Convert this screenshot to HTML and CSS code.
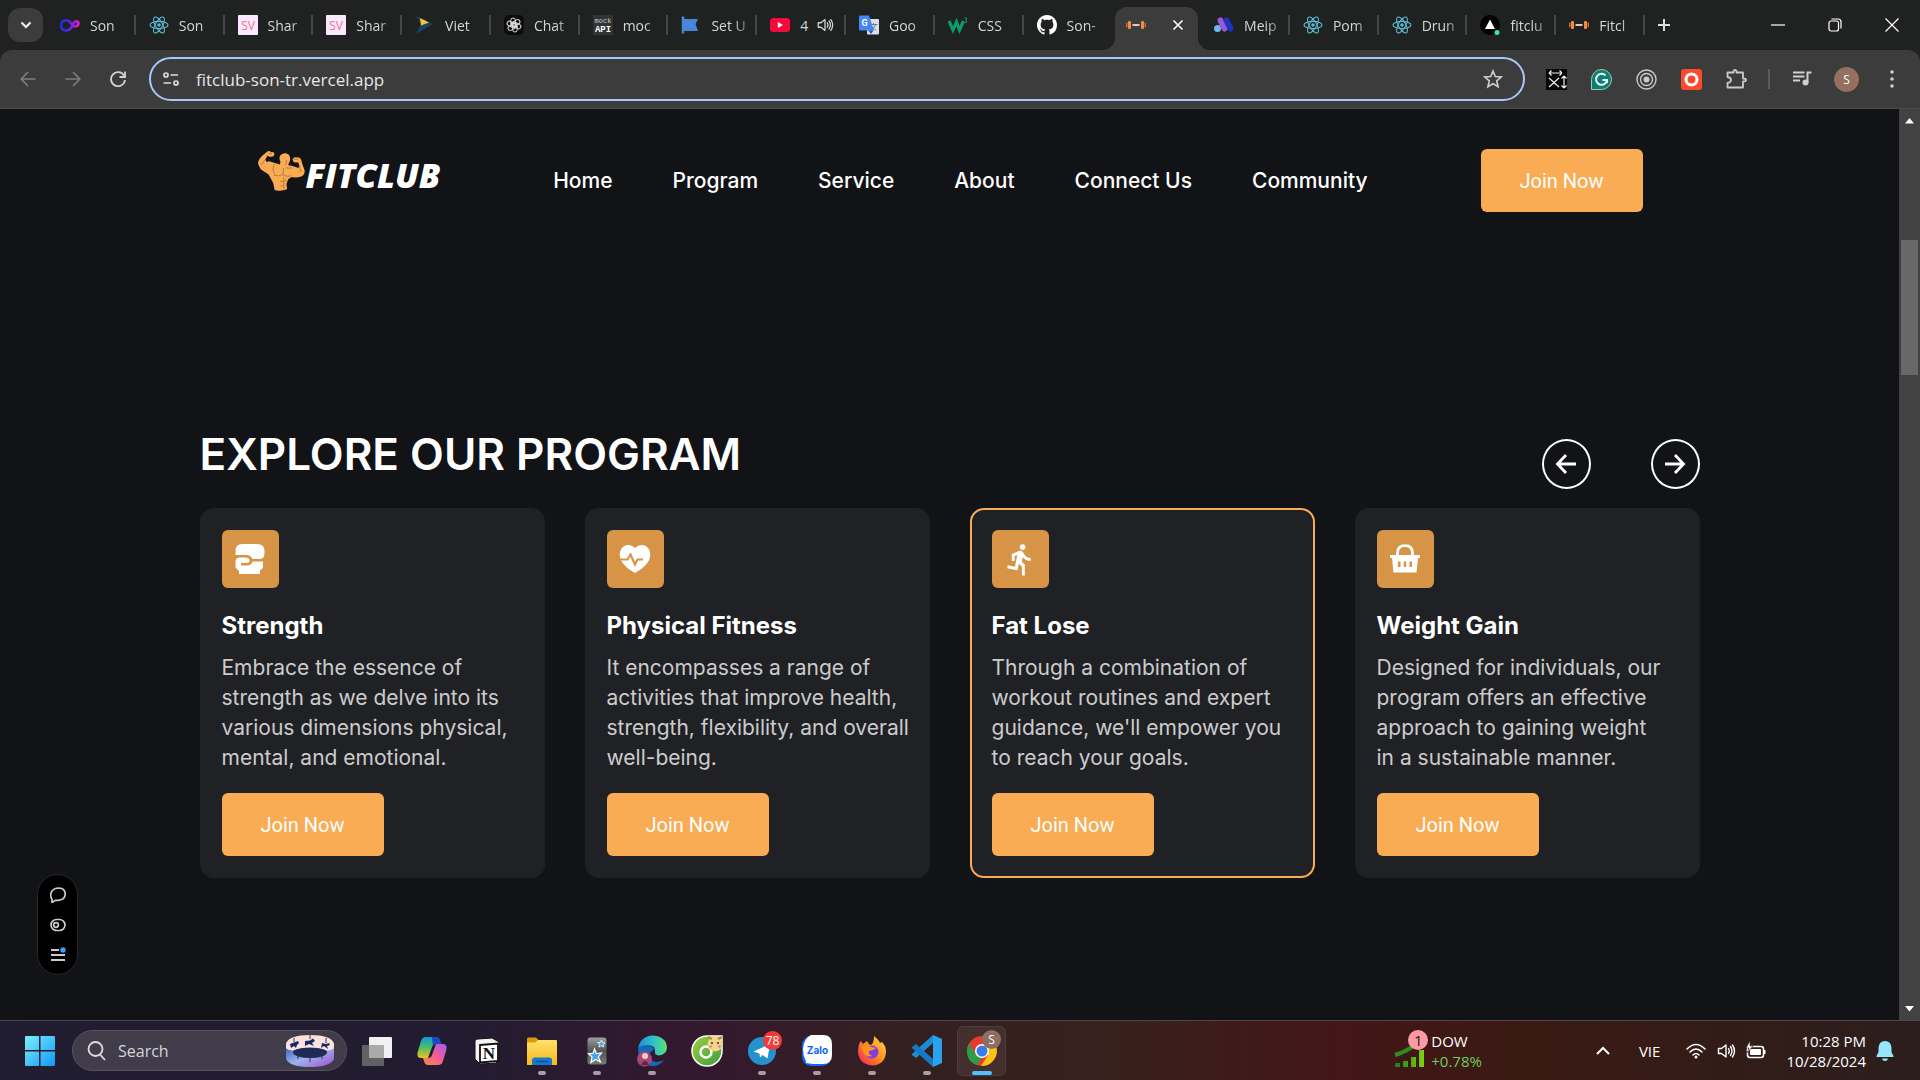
FILE: index.html
```html
<!DOCTYPE html>
<html lang="en">
<head>
<meta charset="utf-8">
<meta name="viewport" content="width=device-width, initial-scale=1">
<title>Fitclub</title>
<link rel="stylesheet" href="styles.css">
</head>
<body>
<svg class="sprite" aria-hidden="true">
  <defs>
    <linearGradient id="win" x1="0" y1="0" x2="1" y2="1"><stop offset="0" stop-color="#7df0fc"/><stop offset="1" stop-color="#0f97f5"/></linearGradient>
    <linearGradient id="loop" x1="0" x2="1"><stop offset="0" stop-color="#1b2ef0"/><stop offset=".5" stop-color="#5b25e8"/><stop offset="1" stop-color="#f516d8"/></linearGradient>
    <linearGradient id="drum" x1="0" y1="0" x2="1" y2="1"><stop offset="0" stop-color="#2c55b5"/><stop offset=".5" stop-color="#9db4ec"/><stop offset="1" stop-color="#a04bd0"/></linearGradient>
    <linearGradient id="cpA" x1="0" y1="0" x2="0" y2="1"><stop offset="0" stop-color="#1693e8"/><stop offset=".45" stop-color="#3fc06a"/><stop offset="1" stop-color="#f2c024"/></linearGradient>
    <linearGradient id="cpB" x1="1" y1="0" x2="0" y2="1"><stop offset="0" stop-color="#a35cf5"/><stop offset=".5" stop-color="#f45c96"/><stop offset="1" stop-color="#f98d3d"/></linearGradient>
    <linearGradient id="fold" x1="0" y1="0" x2="0" y2="1"><stop offset="0" stop-color="#ffe06a"/><stop offset="1" stop-color="#f8b91f"/></linearGradient>
    <linearGradient id="edge" x1="0" y1="0" x2="1" y2="0"><stop offset="0" stop-color="#1b8fdc"/><stop offset=".6" stop-color="#35c6c4"/><stop offset="1" stop-color="#5fe06a"/></linearGradient>
    <linearGradient id="fox" x1="1" y1="0" x2="0" y2="1"><stop offset="0" stop-color="#ffe14a"/><stop offset=".5" stop-color="#ff8a1e"/><stop offset="1" stop-color="#f5156c"/></linearGradient>
    <linearGradient id="coc" x1="0" y1="0" x2="1" y2="1"><stop offset="0" stop-color="#9bd13c"/><stop offset="1" stop-color="#3f9a3f"/></linearGradient>
    <linearGradient id="bars" x1="0" x2="1"><stop offset="0" stop-color="#13801c"/><stop offset="1" stop-color="#7ed40c"/></linearGradient>
    <linearGradient id="anki" x1="0" y1="0" x2="0" y2="1"><stop offset="0" stop-color="#a0a0a0"/><stop offset=".5" stop-color="#555"/><stop offset="1" stop-color="#7a7a7a"/></linearGradient>
  </defs>
  <symbol id="react" viewBox="0 0 20 20"><g fill="none" stroke="#5bb8cf" stroke-width="1.1"><ellipse cx="10" cy="10" rx="9" ry="3.6"/><ellipse cx="10" cy="10" rx="9" ry="3.6" transform="rotate(60 10 10)"/><ellipse cx="10" cy="10" rx="9" ry="3.6" transform="rotate(120 10 10)"/></g><circle cx="10" cy="10" r="1.8" fill="#5bb8cf"/></symbol>
  <symbol id="dumbbell" viewBox="0 0 20 20"><rect x="0" y="7.500" width="1.500" height="5" rx=".7" fill="#c96a2c"/><rect x="2" y="6" width="3" height="8" rx="1" fill="#f08a45"/><rect x="6.500" y="9" width="7" height="2" fill="#e8c9b0"/><rect x="15" y="6" width="3" height="8" rx="1" fill="#f08a45"/><rect x="18.500" y="7.500" width="1.500" height="5" rx=".7" fill="#c96a2c"/></symbol>
  <symbol id="speaker" viewBox="0 0 20 20"><path d="M2.500 7.500H5.500L10 4V16L5.500 12.500H2.500ZM12.500 7.500Q14 10 12.500 12.500M14.500 5.500Q17.500 10 14.500 14.500M16.500 4Q20.500 10 16.500 16" fill="none" stroke="currentColor" stroke-width="1.400" stroke-linejoin="round" stroke-linecap="round"/></symbol>
</svg>

<header class="browser">
  <div class="tabstrip">
    <button class="tabsearch" aria-label="Search tabs"><svg width="12" height="8" viewBox="0 0 12 8"><path d="M1.500 1.500L6 6L10.500 1.500" fill="none" stroke="#fff" stroke-width="2"/></svg></button>
    <nav class="tabs" aria-label="Tabs">
      <a class="tab" href="#"><svg class="fav" viewBox="0 0 20 20"><path d="M12 11C10 17 1 17 1 10.500C1 4 9 4 11.500 9C13.500 13 18.500 11.500 18.500 8.500C18.500 5.500 14.500 5.500 13.500 8C12.500 10.500 12.500 11 11 13" fill="none" stroke="url(#loop)" stroke-width="2.400"/></svg><span class="ttl">Son</span></a>
      <a class="tab" href="#"><svg class="fav"><use href="#react"/></svg><span class="ttl">Son</span></a>
      <a class="tab" href="#"><svg class="fav" viewBox="0 0 20 20"><rect width="20" height="20" rx="1" fill="#fbeaff"/><text x="10" y="14.500" font-family="Open Sans, sans-serif" font-size="12" text-anchor="middle" fill="#ef7582">SV</text></svg><span class="ttl">Shar</span></a>
      <a class="tab" href="#"><svg class="fav" viewBox="0 0 20 20"><rect width="20" height="20" rx="1" fill="#fbeaff"/><text x="10" y="14.500" font-family="Open Sans, sans-serif" font-size="12" text-anchor="middle" fill="#ef7582">SV</text></svg><span class="ttl">Shar</span></a>
      <a class="tab" href="#"><svg class="fav" viewBox="0 0 20 20"><path d="M1 1L18 9L1 19L6 9Z" fill="#174267"/><path d="M5 3L14 7.500L6 10.500Z" fill="#f5c52a"/></svg><span class="ttl">Viet</span></a>
      <a class="tab" href="#"><svg class="fav" viewBox="0 0 20 20"><rect width="20" height="20" rx="5" fill="#0c0c0c"/><g fill="none" stroke="#ddd" stroke-width="1"><rect x="6.800" y="3" width="4.500" height="9" rx="2.200"/><rect x="6.800" y="3" width="4.500" height="9" rx="2.200" transform="rotate(60 10 10)"/><rect x="6.800" y="3" width="4.500" height="9" rx="2.200" transform="rotate(120 10 10)"/><rect x="6.800" y="3" width="4.500" height="9" rx="2.200" transform="rotate(180 10 10)"/><rect x="6.800" y="3" width="4.500" height="9" rx="2.200" transform="rotate(240 10 10)"/><rect x="6.800" y="3" width="4.500" height="9" rx="2.200" transform="rotate(300 10 10)"/></g></svg><span class="ttl">Chat</span></a>
      <a class="tab" href="#"><svg class="fav" viewBox="0 0 20 20"><rect width="20" height="20" fill="#333"/><text x="10" y="8" font-family="Liberation Mono, monospace" font-size="7" text-anchor="middle" fill="#ccc">mock</text><text x="10" y="17" font-family="Liberation Mono, monospace" font-weight="700" font-size="9" text-anchor="middle" fill="#fff">API</text></svg><span class="ttl">moc</span></a>
      <a class="tab" href="#"><svg class="fav" viewBox="0 0 20 20"><path d="M2 1.500V18.500" stroke="#4a86d8" stroke-width="2.500"/><path d="M3 4H17L14.500 9L17 16H3Z" fill="#4a86d8"/></svg><span class="ttl">Set U</span></a>
      <a class="tab" href="#"><svg class="fav" viewBox="0 0 20 20"><rect y="3" width="20" height="14" rx="3.500" fill="#f8083c"/><path d="M7.800 7V13L13 10Z" fill="#fff"/></svg><span class="ttl short">4</span><svg class="sound"><use href="#speaker"/></svg></a>
      <a class="tab" href="#"><svg class="fav" viewBox="0 0 20 20"><rect x="8" y="4" width="12" height="15.500" rx="1" fill="#dcdfe3"/><path d="M10.500 9.500H18.500M14.500 8V9.500M12 16L17 9.500M12 10.500L17 15.500" stroke="#6b7a90" fill="none"/><path d="M0 1.500Q0 .5 1 .5H10L15 15.500H1Q0 15.500 0 14.500Z" fill="#4486f2"/><path d="M9 15.500H14.500L12 19Z" fill="#2a5bc0"/><text x="5.500" y="11" font-family="Roboto, sans-serif" font-weight="700" font-size="9" text-anchor="middle" fill="#fff">G</text></svg><span class="ttl">Goo</span></a>
      <a class="tab" href="#"><svg class="fav" viewBox="0 0 20 20"><path d="M1 6L5 15L8.500 7L11.500 15L15.500 6" fill="none" stroke="#0c9a66" stroke-width="3.200"/><path d="M16.500 3H19L17.500 5Q20 5.500 18.500 7.500L16.500 7.500" fill="none" stroke="#0c9a66"/></svg><span class="ttl">CSS</span></a>
      <a class="tab" href="#"><svg class="fav" viewBox="0 0 16 16"><path fill="#fff" d="M8 0C3.580 0 0 3.580 0 8c0 3.540 2.290 6.530 5.470 7.590.4.070.55-.17.55-.38 0-.19-.01-.82-.01-1.490-2.010.37-2.530-.49-2.690-.94-.09-.23-.48-.94-.82-1.130-.28-.15-.68-.52-.01-.53.63-.01 1.080.58 1.230.82.72 1.210 1.870.87 2.330.66.070-.52.28-.87.51-1.070-1.780-.2-3.640-.89-3.640-3.950 0-.87.31-1.590.82-2.150-.08-.2-.36-1.020.08-2.120 0 0 .67-.21 2.200.82.64-.18 1.320-.27 2-.27s1.360.09 2 .27c1.530-1.040 2.200-.82 2.200-.82.44 1.100.16 1.920.08 2.120.51.56.82 1.270.82 2.150 0 3.070-1.870 3.750-3.650 3.950.29.25.54.73.54 1.480 0 1.070-.01 1.930-.01 2.200 0 .21.15.46.55.38A8.010 8.010 0 0016 8c0-4.420-3.580-8-8-8z"/></svg><span class="ttl">Son-</span></a>
      <a class="tab active" href="#"><svg class="fav"><use href="#dumbbell"/></svg><svg class="close" width="12" height="12" viewBox="0 0 12 12"><path d="M1.500 1.500L10.500 10.500M10.500 1.500L1.500 10.500" stroke="#fff" stroke-width="1.600"/></svg></a>
      <a class="tab" href="#"><svg class="fav" viewBox="0 0 20 20"><circle cx="3.500" cy="13.500" r="3.500" fill="#69b8f0"/><path d="M6.500 5.500L10.500 13.500" stroke="#9a57d6" stroke-width="6" stroke-linecap="round"/><path d="M12.500 5.500L16.500 13.500" stroke="#1b35c0" stroke-width="6" stroke-linecap="round"/></svg><span class="ttl">Meip</span></a>
      <a class="tab" href="#"><svg class="fav"><use href="#react"/></svg><span class="ttl">Pom</span></a>
      <a class="tab" href="#"><svg class="fav"><use href="#react"/></svg><span class="ttl">Drun</span></a>
      <a class="tab" href="#"><svg class="fav" viewBox="0 0 20 20"><circle cx="10" cy="10" r="10" fill="#000"/><path d="M10 4.500L15 14H5Z" fill="#fff"/><circle cx="17" cy="17.500" r="2.500" fill="#3fe0b8"/></svg><span class="ttl">fitclu</span></a>
      <a class="tab" href="#"><svg class="fav"><use href="#dumbbell"/></svg><span class="ttl">Fitcl</span></a>
    </nav>
    <button class="newtab" aria-label="New tab"><svg width="14" height="14" viewBox="0 0 14 14"><path d="M7 1V13M1 7H13" stroke="#ddd" stroke-width="2"/></svg></button>
    <div class="wincontrols">
      <button aria-label="Minimize"><svg width="14" height="14" viewBox="0 0 14 14"><path d="M0 7H14" stroke="#fff" stroke-width="1.200"/></svg></button>
      <button aria-label="Restore"><svg width="14" height="14" viewBox="0 0 14 14"><rect x="1" y="3" width="9.500" height="10" rx="2" fill="none" stroke="#fff" stroke-width="1.200"/><path d="M3.500 1H10Q13 1 13 4V10.500" fill="none" stroke="#fff" stroke-width="1.200"/></svg></button>
      <button aria-label="Close"><svg width="14" height="14" viewBox="0 0 14 14"><path d="M.5 .5L13.500 13.500M13.500 .5L.5 13.500" stroke="#fff" stroke-width="1.200"/></svg></button>
    </div>
  </div>
  <div class="toolbar">
    <div class="navbtns">
      <button aria-label="Back"><svg width="16" height="16" viewBox="0 0 16 16"><path d="M15.500 8H1.500M8 1L1.200 8L8 15" fill="none" stroke="#7c7c7c" stroke-width="1.700"/></svg></button>
      <button aria-label="Forward"><svg width="16" height="16" viewBox="0 0 16 16"><path d="M.5 8H14.500M8 1L14.800 8L8 15" fill="none" stroke="#7c7c7c" stroke-width="1.700"/></svg></button>
      <button aria-label="Reload"><svg width="16" height="16" viewBox="0 0 16 16"><path d="M14 4.500A7 7 0 1 0 15 9" fill="none" stroke="#d4d4d4" stroke-width="1.800"/><path d="M15 .5V6H9.500" fill="none" stroke="#d4d4d4" stroke-width="1.800"/></svg></button>
    </div>
    <div class="omnibox">
      <svg width="16" height="16" viewBox="0 0 16 16"><g fill="none" stroke="#ddd" stroke-width="1.700"><circle cx="3" cy="4" r="2"/><path d="M7.500 4H15M.5 12H8"/><circle cx="13" cy="12" r="2"/></g></svg>
      <input type="text" aria-label="Address" value="fitclub-son-tr.vercel.app">
      <svg width="20" height="20" viewBox="0 0 20 20"><path d="M10 2L12.300 7.500L18.200 8L13.700 11.900L15.100 17.700L10 14.600L4.900 17.700L6.300 11.900L1.800 8L7.700 7.500Z" fill="none" stroke="#cfcfcf" stroke-width="1.600"/></svg>
    </div>
    <div class="exts">
      <button aria-label="Size tool"><svg width="21" height="21" viewBox="0 0 21 21"><rect width="21" height="21" fill="#050505"/><path d="M3 9L13 18M13 9L3 18M3 4H16M3 4L5.500 1.500M3 4L5.500 6.500M16 4L13.500 1.500M16 4L13.500 6.500M18 7V19M18 7L15.500 9.500M18 7L20.500 9.500M18 19L15.500 16.500M18 19L20.500 16.500" stroke="#eee" stroke-width="1.200" fill="none"/></svg></button>
      <button aria-label="Grammar"><svg width="21" height="21" viewBox="0 0 21 21"><path d="M.5 20.500V10.500A10 10 0 1 1 10.500 20.500Z" fill="#0b8070" stroke="#9cc9c2"/><path d="M14.500 6.500A5.500 5.500 0 1 0 16 11H11.500M16 11V14" fill="none" stroke="#fff" stroke-width="2"/></svg></button>
      <button aria-label="Recorder"><svg width="21" height="21" viewBox="0 0 21 21"><g fill="none" stroke="#c9c9c9" stroke-width="1.400"><circle cx="10.500" cy="10.500" r="9.500"/><circle cx="10.500" cy="10.500" r="6"/></g><circle cx="10.500" cy="10.500" r="3" fill="#c9c9c9"/></svg></button>
      <button aria-label="Opener"><svg width="21" height="21" viewBox="0 0 21 21"><rect width="21" height="21" rx="3" fill="#fb4b2c"/><circle cx="10.500" cy="10.500" r="5.500" fill="none" stroke="#fff" stroke-width="3"/></svg></button>
      <button aria-label="Extensions"><svg width="21" height="21" viewBox="0 0 21 21"><path d="M1.500 3.500H7.500V2Q9 0 10.500 2V3.500H17V9.500Q20 9.500 20 11T17 12.500V18.500H1.500V14Q5 13.500 5 11T1.500 8Z" fill="none" stroke="#c9c9c9" stroke-width="1.800" stroke-linejoin="round"/></svg></button>
      <span class="vsep"></span>
      <button aria-label="Media"><svg width="20" height="20" viewBox="0 0 20 20"><path d="M1 3.500H12.500M1 7.500H12.500M1 11.500H8" stroke="#d0d0d0" stroke-width="2"/><path d="M15.500 13.500V3.500H19.500" fill="none" stroke="#d0d0d0" stroke-width="2"/><circle cx="13.500" cy="13.500" r="3" fill="#d0d0d0"/></svg></button>
      <button class="profile" aria-label="Profile">S</button>
      <button aria-label="Menu"><svg width="4" height="20" viewBox="0 0 4 20"><g fill="#cfcfcf"><circle cx="2" cy="3" r="1.800"/><circle cx="2" cy="10" r="1.800"/><circle cx="2" cy="17" r="1.800"/></g></svg></button>
    </div>
  </div>
</header>

<div class="viewport">
  <main class="page">
    <header class="site-header">
      <a class="logo" href="#" aria-label="Fitclub home">
        <svg width="49" height="41" viewBox="24 30 146 124"><path fill="#f9ac54" d="M27 74C24 66 30 56 38 48L55 34L62 33L64 37L72 36L76 42L73 49L61 51L55 47L48 59L52 66L60 64L72 68L92 74L94 66C88 56 90 42 106 40C120 40 126 50 122 64L117 76L128 78L146 84L152 82L148 68L134 67L130 58L136 52L150 53L156 58L160 72L167 92C168 100 164 108 156 110C146 114 134 114 128 112L118 118L112 132L114 148C106 153 84 155 76 150L72 130L58 104L34 88Z"/><path d="M74 106Q90 112 102 104L103 84M103 106Q116 112 126 108M76 72Q66 92 78 104M104 112V150M92 124Q99 128 103 124M106 124Q112 122 113 120M94 138Q100 140 103 136M46 60Q40 72 34 74M152 84Q160 92 150 98M130 84Q120 86 110 84M112 60Q114 72 108 76M133 58H148M58 40L68 42" fill="none" stroke="#7c4b1d" stroke-width="1.500"/></svg>
        <span>FITCLUB</span>
      </a>
      <nav class="menu" aria-label="Main">
        <a href="#">Home</a><a href="#">Program</a><a href="#">Service</a><a href="#">About</a><a href="#">Connect Us</a><a href="#">Community</a>
      </nav>
      <button class="btn">Join Now</button>
    </header>

    <section class="program">
      <div class="program-head">
        <h2>EXPLORE OUR PROGRAM</h2>
        <div class="arrows">
          <button aria-label="Previous"><svg width="22" height="22" viewBox="0 0 22 22"><path d="M21 11H3M11 2L2.500 11L11 20" fill="none" stroke="#fff" stroke-width="2.800"/></svg></button>
          <button aria-label="Next"><svg width="22" height="22" viewBox="0 0 22 22"><path d="M1 11H19M11 2L19.500 11L11 20" fill="none" stroke="#fff" stroke-width="2.800"/></svg></button>
        </div>
      </div>
      <div class="cards">
        <article class="card">
          <span class="icon"><svg width="30" height="30" viewBox="0 0 30 30"><path fill="#fff" d="M7 0H22Q29.500 0 29.500 7V9.500Q29.500 15 24 15H17.500Q15.500 11 11.500 11H.5V7Q.5 0 7 0ZM4.500 13.500H11.500Q14.500 14 14.500 16.500Q14.500 19 12 19H6V21.500H12Q16.500 21.500 17.500 17.500H28V24L25 26.500V30H4V27L.5 23.500V17.500Q.5 14 4.500 13.500Z"/></svg></span>
          <h3>Strength</h3>
          <p>Embrace the essence of<br>strength as we delve into its<br>various dimensions physical,<br>mental, and emotional.</p>
          <button class="btn">Join Now</button>
        </article>
        <article class="card">
          <span class="icon"><svg width="32" height="32" viewBox="0 0 32 32"><path fill="#fff" d="M16 5C20 1 26 1 29 5C32 9 32 14 29 19Q25 25 16 30Q7 25 3 19C0 14 0 9 3 5C6 1 12 1 16 5Z"/><path d="M0 16.500H8.500L11.500 11.500L16 21.500L18.500 16.500H24" fill="none" stroke="#d79447" stroke-width="2.200"/></svg></span>
          <h3>Physical Fitness</h3>
          <p>It encompasses a range of<br>activities that improve health,<br>strength, flexibility, and overall<br>well-being.</p>
          <button class="btn">Join Now</button>
        </article>
        <article class="card selected">
          <span class="icon"><svg width="35" height="35" viewBox="0 0 24 24"><path fill="#fff" d="M13.490 5.480c1.100 0 2-.9 2-2s-.9-2-2-2-2 .9-2 2 .9 2 2 2zm-3.600 13.900l1-4.400 2.100 2v6h2v-7.500l-2.100-2 .6-3c1.300 1.500 3.300 2.500 5.500 2.500v-2c-1.900 0-3.500-1-4.300-2.400l-1-1.600c-.4-.6-1-1-1.700-1-.3 0-.5.1-.8.1l-5.200 2.200v4.700h2v-3.400l1.800-.7-1.600 8.100-4.900-1-.4 2 7 1.400z"/></svg></span>
          <h3>Fat Lose</h3>
          <p>Through a combination of<br>workout routines and expert<br>guidance, we'll empower you<br>to reach your goals.</p>
          <button class="btn">Join Now</button>
        </article>
        <article class="card">
          <span class="icon"><svg width="30" height="30" viewBox="0 0 30 30"><path d="M7.500 13V9Q7.500 1.700 15 1.700T22.500 9V13" fill="none" stroke="#fff" stroke-width="2.800"/><path fill="#fff" fill-rule="evenodd" d="M0 11H30V14H28L26.500 28.500H3.500L2 14H0ZM8 17.500V23H10.500V17.500ZM13.800 17.500V23H16.200V17.500ZM19.500 17.500V23H22V17.500Z"/></svg></span>
          <h3>Weight Gain</h3>
          <p>Designed for individuals, our<br>program offers an effective<br>approach to gaining weight<br>in a sustainable manner.</p>
          <button class="btn">Join Now</button>
        </article>
      </div>
    </section>

    <aside class="tools">
      <button aria-label="Comments"><svg width="16" height="16" viewBox="0 0 16 16"><path d="M2 15.500V12.500Q0 9 1 6Q2.500 1.500 8 1Q15 1 15.300 7Q15 13 8 13.300H5.500Z" fill="none" stroke="#ccc" stroke-width="1.700"/></svg></button>
      <button aria-label="Draft mode"><svg width="16" height="16" viewBox="0 0 16 16"><rect x="1" y="2.500" width="14" height="11" rx="5.500" fill="none" stroke="#ccc" stroke-width="1.700"/><circle cx="6" cy="8" r="2.300" fill="none" stroke="#ccc" stroke-width="1.700"/></svg></button>
      <button aria-label="Menu"><svg width="16" height="16" viewBox="0 0 16 16"><path d="M1 3H9M1 8H15M1 13H15" stroke="#ccc" stroke-width="2"/><circle cx="13" cy="3" r="2.700" fill="#3f9bff"/></svg></button>
    </aside>
  </main>
  <div class="scrollbar">
    <svg width="9" height="6" viewBox="0 0 9 6"><path d="M4.500 0L9 5.500H0Z" fill="#fff"/></svg>
    <div class="track"><div class="thumb"></div></div>
    <svg width="9" height="6" viewBox="0 0 9 6"><path d="M4.500 5.500L9 0H0Z" fill="#fff"/></svg>
  </div>
</div>

<footer class="taskbar">
  <button class="start" aria-label="Start"><svg width="30" height="30" viewBox="0 0 30 30"><path d="M0 1Q0 0 1 0H14V14H0ZM15.500 0H29Q30 0 30 1V14H15.500ZM0 15.500H14V30H1Q0 30 0 29ZM15.500 15.500H30V29Q30 30 29 30H15.500Z" fill="url(#win)"/></svg></button>
  <label class="search">
    <svg width="20" height="20" viewBox="0 0 20 20"><circle cx="8.500" cy="8" r="7" fill="none" stroke="#ddd" stroke-width="1.800"/><path d="M13 13.500L18 19" stroke="#ddd" stroke-width="1.800"/></svg>
    <input type="text" placeholder="Search" aria-label="Search">
    <svg width="48" height="32" viewBox="0 0 48 32"><path d="M0 9V24Q4 32 24 32T48 24V9Z" fill="url(#drum)"/><ellipse cx="24" cy="17.500" rx="17" ry="5.500" fill="#1d2c57"/><path d="M0 8.500Q3 0 24 0T48 8.500V13Q46 15 41 15.500Q34 12.500 24 12.500T7 15.500Q1 15 0 13Z" fill="#fbe3dc"/><g fill="#17286e"><path d="M4 9L8 7.500L12 6L13 8L11 10L10 13L8 11L5 13Z"/><path d="M19 6L24 5.500L27 3.500L29 6L26 8L28 11L23 9L19 11Z"/><path d="M36 8L40 9L43 8L44 10L41 11L42 14L38 11L35 13Z"/></g><path d="M12 17V24M24 19V27M36 17V24M24 0V4M8 3V7M40 3V8" stroke="#3a2a56" stroke-width="1"/></svg>
  </label>
  <div class="apps">
    <button aria-label="Task view"><svg width="30" height="30" viewBox="0 0 30 30"><rect x="7" y="1" width="23" height="21" rx="1" fill="#f1f1f1"/><rect y="9" width="22" height="21" rx="1" fill="#6d6d6d" fill-opacity=".85"/><rect x="7" y="9" width="15" height="13" fill="#aaa"/></svg></button>
    <button aria-label="Copilot"><svg width="30" height="30" viewBox="0 0 30 30"><path d="M9 1H19Q22 1 23 5L24 8H19Q16 8 15 11L11 22H4Q-1 22 1 15L4 5Q5 1 9 1Z" fill="url(#cpA)"/><path d="M15 1H19Q22 1 23 5L24 8H19Q17 8 16 10Z" fill="#1749c8"/><path d="M21 29H11Q8 29 7 25L6 22H11Q14 22 15 19L19 8H26Q31 8 29 15L26 25Q25 29 21 29Z" fill="url(#cpB)"/></svg></button>
    <button aria-label="Notion"><svg width="26" height="28" viewBox="0 0 26 28"><path d="M1 4Q1 2 4 2L18 1L25 5V23L22 26L6 27L1 22Z" fill="#f4f4f4" stroke="#111"/><path d="M6 8L24 6.500V24L6 25.500Z" fill="#fff" stroke="#111" stroke-width="1.800"/><text x="15" y="22" font-family="Liberation Serif, serif" font-weight="700" font-size="17" text-anchor="middle" fill="#111">N</text></svg></button>
    <button class="run" aria-label="File Explorer"><svg width="30" height="30" viewBox="0 0 30 30"><path d="M0 3Q0 1.500 1.500 1.500H9L12 4.500V9H0Z" fill="#dc9a0b"/><path d="M0 6.500H8L11 4H29Q30 4 30 5V29H0Z" fill="url(#fold)"/><path d="M5 29V24Q5 21.500 8 21.500H22Q25 21.500 25 24V29Z" fill="#1579cf"/><path d="M9 25.500H21" stroke="#0b4f96" stroke-width="1.500"/></svg></button>
    <button class="run" aria-label="Anki"><svg width="22" height="30" viewBox="0 0 22 30"><rect x="1" y="1" width="20" height="28" rx="3" fill="url(#anki)" stroke="#222"/><path d="M8.500 13L10.500 17.500L15.500 17L12.300 21L14.500 26L9.500 23.500L5 26.500L6 21L2.500 17.500L7 17.500Z" fill="#45a7ea" stroke="#fff" stroke-width="1.200"/><path d="M15.500 4L16.500 6.500L19 7L17 8.500L17.500 11L15.200 9.700L13 11L13.500 8.500L11.800 6.500L14.500 6.500Z" fill="#45a7ea" stroke="#fff" stroke-width=".8"/></svg></button>
    <button class="run" aria-label="Edge"><svg width="30" height="32" viewBox="0 0 30 32"><path d="M1 14Q3 1 16 0.500Q30 2 30 13Q29 20 22 20.500Q17 20 18 16Q18 11 13 10.500Q4 10 1 14Z" fill="url(#edge)"/><path d="M1 14Q4 9 12 10.500Q17 12 17 15Q11 17 13 23Q17 30 27 25Q22 32 14 31Q1 29 1 14Z" fill="#1668b8"/><circle cx="7.500" cy="24" r="7.500" fill="#a8457c"/><circle cx="8" cy="21" r="3" fill="#f1cfc0"/><path d="M4 30Q8 22 12 30Z" fill="#5a2a3a"/></svg></button>
    <button aria-label="Coc Coc"><svg width="32" height="32" viewBox="0 0 32 32"><path d="M31 1V16A15 15 0 1 1 16 1Z" fill="url(#coc)" stroke="#fff" stroke-width="1.500"/><circle cx="15" cy="17" r="5.500" fill="none" stroke="#fff" stroke-width="2.500"/><circle cx="24" cy="9" r="7.500" fill="#f3d48a"/><path d="M17 2L21 4M31 2L27 4" stroke="#b98a3a" stroke-width="2"/><circle cx="21" cy="8" r="1" fill="#333"/><circle cx="27" cy="8" r="1" fill="#333"/><circle cx="19.500" cy="11.500" r="1.300" fill="#e88080"/><circle cx="28.500" cy="11.500" r="1.300" fill="#e88080"/></svg></button>
    <button class="run" aria-label="Telegram"><svg width="28" height="28" viewBox="0 0 28 28"><circle cx="14" cy="14" r="14" fill="#2592cd"/><path d="M5.500 14.500L22 7L19.500 21.500L14.500 18L12 20.500L11.500 16.500Z" fill="#fff"/></svg><span class="badge">78</span></button>
    <button class="run" aria-label="Zalo"><svg width="32" height="32" viewBox="0 0 32 32"><rect x="1" y="1" width="29" height="30" rx="9" fill="#0a68f5"/><path d="M10 0H22Q31 0 31 9V20Q31 29 22 29H12L5 28Q5 25 4 24Q2 20 2 14Q3 3 10 0Z" fill="#fff"/><text x="16.500" y="19" font-family="Inter, sans-serif" font-weight="700" font-size="10" text-anchor="middle" fill="#0a68f5">Zalo</text></svg></button>
    <button class="run" aria-label="Firefox"><svg width="30" height="31" viewBox="0 0 30 31"><path d="M1 17Q1 9 4 6L6 9L10 6Q11 9 14 10Q17 8 17 1Q22 5 23 8L25 7Q29 11 29 17Q28 30 15 30.500Q2 29 1 17Z" fill="url(#fox)"/><circle cx="15" cy="17" r="6.500" fill="#7b3fe0"/><path d="M4 12Q10 10 15 12L19 13Q16 16 12 16Q11 20 16 21Q8 23 6 16Z" fill="#ff9320"/></svg></button>
    <button class="run" aria-label="Visual Studio Code"><svg width="30" height="32" viewBox="0 0 30 32"><path d="M21 0L30 4V28L21 32Z" fill="#2aa2f0"/><path d="M21 0V8L4 23L0 20V19Z" fill="#1f8ad6"/><path d="M21 32V24L4 9L0 12V13Z" fill="#1779c2"/></svg></button>
    <button class="run current" aria-label="Chrome"><svg width="30" height="30" viewBox="0 0 30 30"><circle cx="15" cy="15" r="15" fill="#e33b2e"/><path d="M2 7.500L9 19L15 22L10 29Q0 26 0 15Q0 11 2 7.500Z" fill="#2a9d4a"/><path d="M15 8H28.500Q31 14 29 20Q25 30 14 30L21 19Z" fill="#fbc116"/><circle cx="15" cy="15" r="7" fill="#fff"/><circle cx="15" cy="15" r="5.500" fill="#3b7de8"/></svg><span class="avatar">S</span></button>
  </div>
  <div class="tray">
    <button class="stocks">
      <svg width="32" height="22" viewBox="0 0 32 22"><path d="M1 10Q14 6 20 0" fill="none" stroke="#2c8f1c" stroke-width="4"/><path d="M1 18H6V22H1ZM9 16H14V22H9ZM17 12H22V22H17ZM25 5H30V22H25Z" fill="url(#bars)"/></svg>
      <span class="one">1</span>
      <span class="quote"><span>DOW</span><span class="up">+0.78%</span></span>
    </button>
    <button aria-label="Hidden icons"><svg width="14" height="10" viewBox="0 0 14 10"><path d="M1 8L7 2L13 8" fill="none" stroke="#fff" stroke-width="2"/></svg></button>
    <button class="lang">VIE</button>
    <button class="status" aria-label="Network, sound, battery">
      <svg width="20" height="20" viewBox="0 0 20 20"><g fill="none" stroke="#fff" stroke-width="1.500" stroke-linecap="round"><path d="M1 8Q10 -1 19 8M4 11Q10 5 16 11M7 14Q10 11 13 14"/></g><circle cx="10" cy="16" r="1.500" fill="#fff"/></svg>
      <svg width="20" height="20"><use href="#speaker"/></svg>
      <svg width="20" height="20" viewBox="0 0 20 20"><rect x="1.500" y="5.500" width="16" height="11" rx="2.500" fill="none" stroke="#fff" stroke-width="1.500"/><rect x="4" y="8" width="11" height="6" rx="1" fill="#fff"/><path d="M18.500 9V13" stroke="#fff" stroke-width="2"/><path d="M4 0L0 7H3L1 12L7 5H4Z" fill="#fff" stroke="#3a211c" stroke-width=".6"/></svg>
    </button>
    <button class="clock"><span>10:28 PM</span><span>10/28/2024</span></button>
    <button aria-label="Notifications"><svg width="18" height="20" viewBox="0 0 18 20"><path d="M9 0Q15 0 15.500 7V11L17.500 15V16H.5V15L2.500 11V7Q3 0 9 0ZM6 17.500H12Q11.500 20 9 20T6 17.500Z" fill="#96e6fb"/></svg></button>
  </div>
</footer>
</body>
</html>
```
FILE: styles.css
```css
* {
  box-sizing: border-box;
}

body {
  margin: 0;
  min-height: 100vh;
  display: flex;
  flex-direction: column;
  background: #121317;
  color: #fff;
  font-family: "Open Sans", sans-serif;
}

button {
  display: flex;
  align-items: center;
  justify-content: center;
  padding: 0;
  border: 0;
  background: none;
  color: inherit;
  font: inherit;
}

a {
  color: inherit;
  text-decoration: none;
}

svg {
  display: block;
  flex: none;
}

.sprite {
  position: absolute;
  width: 0;
  height: 0;
}

/* Browser chrome */

.browser {
  background: #202221;
}

.tabstrip {
  display: flex;
  height: 50px;
  padding-left: 8px;
}

.tabsearch {
  width: 35px;
  height: 34px;
  margin: 8px 4px 0 0;
  border-radius: 12px;
  background: #3c3c3c;
  flex: none;
}

.tabs {
  display: grid;
  grid-template-columns: repeat(18, minmax(0, 1fr));
  flex: 0 1 1598px;
}

.tab {
  position: relative;
  display: flex;
  align-items: center;
  gap: 10px;
  padding-left: 13px;
  font-size: 14px;
  color: #d5d7d6;
  background: linear-gradient(#454746, #454746) right center / 2px 20px no-repeat;
}

.tab:nth-child(12) {
  background: none;
}

.fav {
  width: 20px;
  height: 20px;
}

.ttl {
  width: 36px;
  white-space: nowrap;
  -webkit-mask-image: linear-gradient(90deg, #000 60%, #0006);
  mask-image: linear-gradient(90deg, #000 60%, #0006);
}

.ttl.short {
  width: 10px;
  -webkit-mask-image: none;
  mask-image: none;
}

.sound {
  width: 18px;
  height: 18px;
  margin-left: -4px;
}

.tab.active {
  justify-content: space-between;
  margin: 7px 3px 0;
  padding: 0 14px 7px 11px;
  border-radius: 12px 12px 0 0;
  background: #3c3c3c;
}

.tab.active::before,
.tab.active::after {
  content: "";
  position: absolute;
  bottom: 0;
  left: -12px;
  width: 12px;
  height: 12px;
  background: radial-gradient(circle at 0 0, transparent 12px, #3c3c3c 12px);
}

.tab.active::after {
  left: 100%;
  background: radial-gradient(circle at 100% 0, transparent 12px, #3c3c3c 12px);
}

.newtab {
  width: 38px;
  height: 50px;
}

.wincontrols {
  display: flex;
  margin-left: auto;
}

.wincontrols button {
  width: 57px;
  height: 50px;
}

.toolbar {
  display: flex;
  align-items: center;
  height: 59px;
  padding: 0 6px 0 5px;
  border-bottom: 1px solid #4a4a48;
  border-radius: 12px 12px 0 0;
  background: #3c3c3c;
}

.navbtns {
  display: flex;
  padding-right: 9px;
}

.navbtns button {
  width: 45px;
  height: 44px;
}

.omnibox {
  display: flex;
  align-items: center;
  gap: 17px;
  flex: 1;
  height: 44px;
  padding: 0 20px 0 12px;
  border: 2px solid #a8c7fa;
  border-radius: 22px;
}

.omnibox input {
  flex: 1;
  min-width: 0;
  padding: 0;
  border: 0;
  outline: 0;
  background: none;
  color: #e6e6e6;
  font: 17px "Open Sans", sans-serif;
}

.exts {
  display: flex;
  align-items: center;
  padding-left: 9px;
}

.exts button {
  width: 45px;
  height: 44px;
}

.vsep {
  width: 2px;
  height: 20px;
  margin: 0 9px;
  background: #5c5c5c;
}

.exts .profile {
  width: 25px;
  height: 25px;
  margin: 0 10px;
  border-radius: 50%;
  background: #93705f;
  font-size: 12px;
}

/* Page */

.viewport {
  display: flex;
  flex: 1;
}

.page {
  position: relative;
  flex: 1;
  min-width: 0;
  font-family: Inter, sans-serif;
}

.site-header {
  display: flex;
  align-items: center;
  justify-content: space-between;
  max-width: 1386px;
  margin: 0 auto;
  padding: 40px 0;
}

.logo {
  display: flex;
  align-items: center;
  font: italic 800 34px/41px "Open Sans", sans-serif;
}

.logo svg {
  margin-top: -20px;
}

.logo span {
  margin-top: -10px;
}

.menu {
  display: flex;
  gap: 60px;
  font-size: 21px;
  font-weight: 500;
  line-height: 30px;
}

.btn {
  width: 162px;
  height: 63px;
  border-radius: 6px;
  background: #f9ac54;
  color: #fff;
  font: 400 20px Roboto, sans-serif;
}

.program {
  max-width: 1500px;
  margin: 166px auto 0;
}

.program-head {
  display: flex;
  align-items: flex-end;
  justify-content: space-between;
}

h2 {
  margin: 0;
  font-size: 44px;
  font-weight: 600;
  line-height: 72px;
}

.arrows {
  display: flex;
  gap: 60px;
  padding-bottom: 1px;
}

.arrows button {
  width: 49px;
  height: 50px;
  border: 2px solid #fff;
  border-radius: 50%;
}

.cards {
  display: grid;
  grid-template-columns: repeat(4, minmax(0, 1fr));
  gap: 40px;
  margin-top: 18px;
}

.card {
  padding: 20px;
  border: 2px solid #202125;
  border-radius: 14px;
  background: #202125;
}

.card.selected {
  border-color: #f9ac54;
}

.icon {
  display: flex;
  align-items: center;
  justify-content: center;
  width: 57px;
  height: 58px;
  border-radius: 6px;
  background: #d79447;
}

h3 {
  margin: 20px 0 9px;
  font-size: 24px;
  font-weight: 700;
  line-height: 36px;
}

.card p {
  margin: 0 0 20px;
  color: #cccccd;
  font-size: 21px;
  line-height: 30px;
  white-space: nowrap;
}

.tools {
  position: absolute;
  left: 37px;
  bottom: 45px;
  display: flex;
  flex-direction: column;
  justify-content: center;
  gap: 14px;
  width: 41px;
  height: 101px;
  border: 1px solid #2a2a2c;
  border-radius: 21px;
  background: #000;
}

.scrollbar {
  display: flex;
  flex-direction: column;
  align-items: center;
  width: 21px;
  padding: 9px 0 8px;
  background: #424242;
}

.track {
  flex: 1;
  padding-top: 116px;
}

.thumb {
  width: 17px;
  height: 135px;
  background: #686868;
}

/* Taskbar */

.taskbar {
  display: flex;
  align-items: center;
  height: 60px;
  padding: 0 26px 0 18px;
  border-top: 1px solid #4c4650;
  background: linear-gradient(90deg, #211d30 0%, #231c30 25%, #34182f 36%, #33211f 48%, #38201d 58%, #431617 70%, #3a1a13 80%, #2b1e1d 100%);
}

.start {
  width: 44px;
  height: 48px;
}

.search {
  display: flex;
  align-items: center;
  gap: 11px;
  width: 275px;
  height: 41px;
  margin: 0 2px 0 10px;
  padding: 0 12px 0 14px;
  border: 1px solid #57525f;
  border-radius: 21px;
  background: #403c4a;
}

.search input {
  flex: 1;
  min-width: 0;
  padding: 0;
  border: 0;
  outline: 0;
  background: none;
  font: 16px "Open Sans", sans-serif;
}

.search input::placeholder {
  color: #d6d4da;
  opacity: 1;
}

.apps {
  display: flex;
}

.apps button {
  position: relative;
  width: 55px;
  height: 50px;
}

.run::after {
  content: "";
  position: absolute;
  bottom: 1px;
  left: 50%;
  width: 8px;
  height: 4px;
  margin-left: -4px;
  border-radius: 2px;
  background: #a69da6;
}

.apps .current {
  width: 49px;
  margin: 0 3px;
  border: 1px solid #4d3c3a;
  border-radius: 6px;
  background: #432f2d;
}

.current::after {
  bottom: 0;
  width: 20px;
  margin-left: -10px;
  background: #4cc2ff;
}

.badge,
.avatar {
  position: absolute;
  top: 5px;
  right: 7px;
  width: 19px;
  height: 19px;
  border-radius: 50%;
  background: #f23b36;
  font-size: 12px;
  line-height: 19px;
  text-align: center;
}

.avatar {
  top: 3px;
  right: 4px;
  background: #8d6e63;
}

.tray {
  display: flex;
  align-items: center;
  margin-left: auto;
  font-size: 15px;
}

.stocks {
  position: relative;
  gap: 5px;
  margin-right: 114px;
}

.stocks svg {
  margin-top: 10px;
}

.one {
  position: absolute;
  top: -1px;
  left: 14px;
  width: 20px;
  height: 20px;
  border-radius: 50%;
  background: #ff99a4;
  color: #222;
  line-height: 20px;
}

.quote,
.clock {
  display: flex;
  flex-direction: column;
  line-height: 20px;
}

.quote {
  align-items: flex-start;
}

.up {
  color: #6ccb5f;
}

.lang {
  margin: 0 26px 0 29px;
}

.status {
  gap: 10px;
}

.clock {
  align-items: flex-end;
  margin: 0 10px 0 20px;
}
```
